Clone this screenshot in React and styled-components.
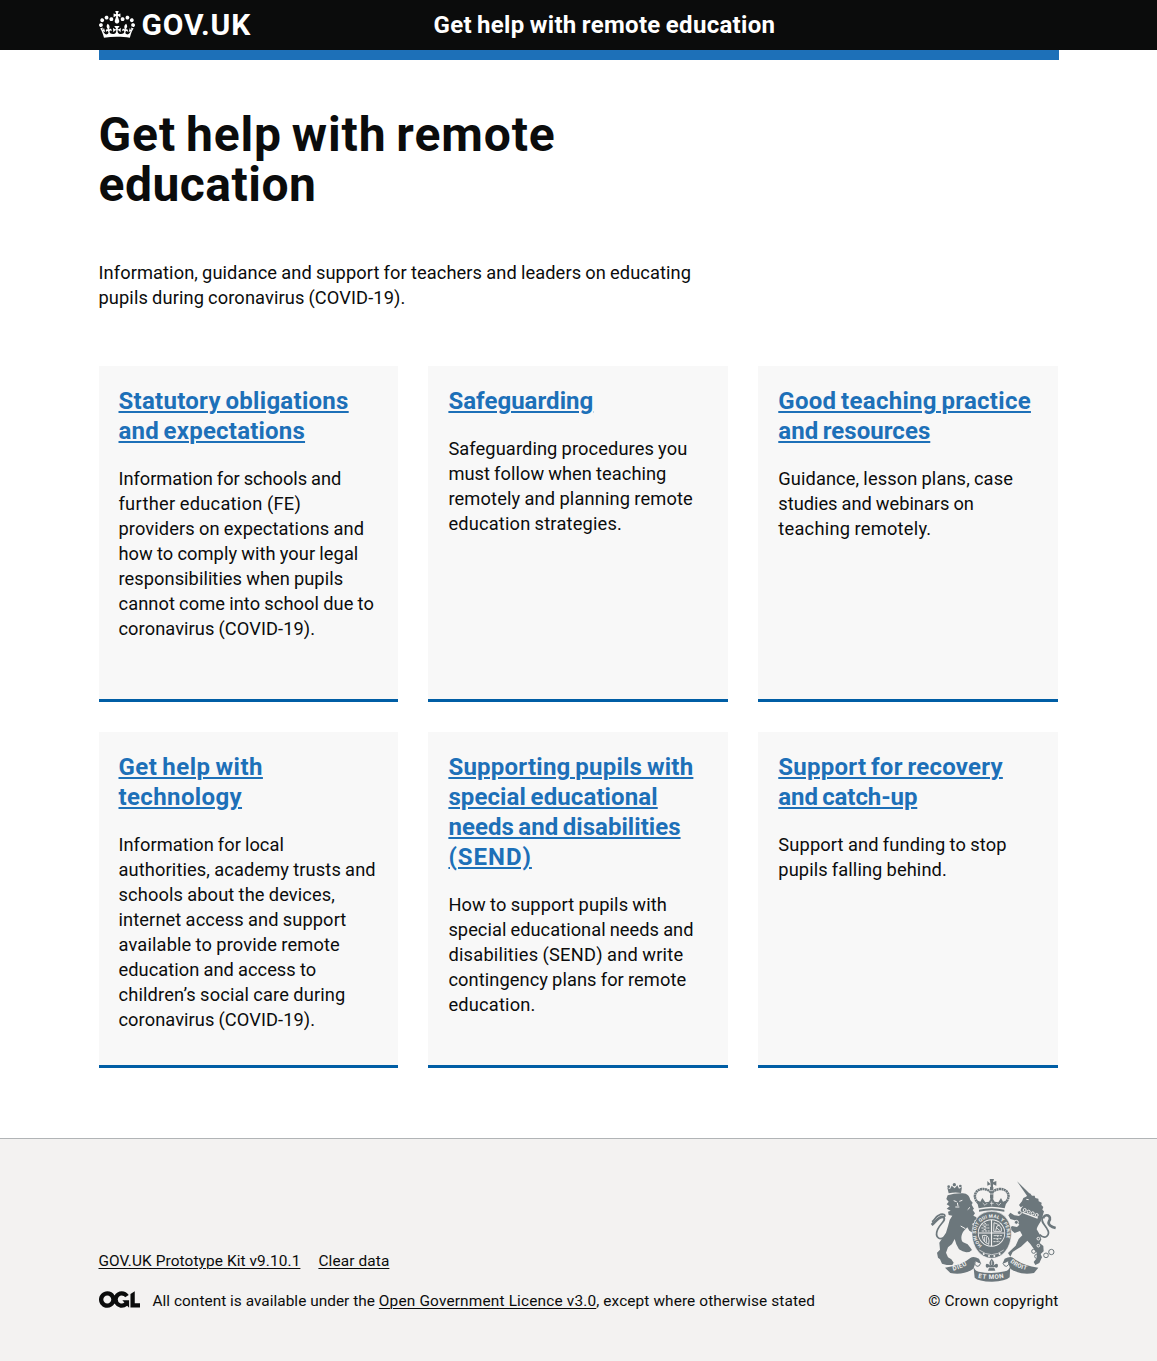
import React from 'react';
import styled, { createGlobalStyle } from 'styled-components';

const ink = '#0b0c0c';
const blue = '#1d70b8';
const crestGrey = '#6c777c';
const paper = '#f3f2f1';

const GlobalStyle = createGlobalStyle`
  body {
    margin: 0;
    background: ${paper};
    color: ${ink};
    font-family: Roboto, 'Liberation Sans', sans-serif;
  }
`;

const Container = styled.div`
  width: 960px;
  margin: 0 auto;
`;

const Header = styled.header`
  background: ${ink};
  color: #fff;
`;

const HeaderRow = styled(Container)`
  display: flex;
  height: 50px;
`;

const BlueBar = styled.div`
  width: 960px;
  height: 10px;
  margin: 0 auto;
  background: ${blue};
`;

const Brand = styled.a`
  display: flex;
  box-sizing: border-box;
  width: 335px;
  padding-top: 10px;
  gap: 7px;
  color: #fff;
  text-decoration: none;
`;

const CrownIcon = styled.svg`
  display: block;
  width: 36px;
  height: 27px;
  margin-top: 0.6px;
`;

const BrandName = styled.span`
  font-size: 30px;
  font-weight: 700;
  line-height: 30px;
  letter-spacing: 0.8px;
`;

const ServiceName = styled.span`
  font-size: 24px;
  font-weight: 700;
  line-height: 51px;
  letter-spacing: 0.3px;
  word-spacing: -1px;
`;

const Page = styled.div`
  background: #fff;
`;

const Main = styled.main`
  width: 960px;
  margin: 0 auto;
  padding: 50px 0 70px;
`;

const Line = styled.span`
  display: block;
  width: max-content;
  white-space: nowrap;
  letter-spacing: ${(p) => p.$track}px;
`;

const Title = styled.h1`
  margin: 0 0 50px;
  font-size: 48px;
  font-weight: 700;
  line-height: 50px;
  word-spacing: -3px;
`;

const Paragraph = styled.p`
  margin: 0;
  font-size: 18.25px;
  line-height: 25px;
  word-spacing: -0.5px;
`;

const Cards = styled.div`
  display: grid;
  grid-template-columns: repeat(3, 299.9px);
  grid-auto-rows: 336px;
  gap: 30px;
  margin-top: 56px;
`;

const Card = styled.section`
  box-sizing: border-box;
  padding: 20px;
  background: #f8f8f8;
  border-bottom: 3px solid #005ea5;
`;

const CardTitle = styled.h2`
  margin: 0 0 20px;
  font-size: 24px;
  font-weight: 700;
  line-height: 30px;
  word-spacing: -1.5px;
`;

const CardLink = styled.a`
  color: ${blue};
  text-decoration: none;

  ${Line} {
    text-decoration: underline;
    text-decoration-thickness: 2px;
    text-underline-offset: 2px;
  }
`;

const Footer = styled.footer`
  border-top: 1px solid #b1b4b6;
  background: ${paper};
  font-size: 15.4px;
  line-height: 20px;
`;

const FooterRow = styled(Container)`
  display: flex;
  justify-content: space-between;
  align-items: flex-end;
  padding: 39px 0 50px;
`;

const FooterLinks = styled.nav`
  display: flex;
  gap: 18px;
  margin-bottom: 20px;
`;

const FooterLink = styled.a`
  color: ${ink};
  letter-spacing: ${(p) => p.$track}px;
  text-decoration: underline;
  text-decoration-thickness: 1px;
  text-underline-offset: 2px;
`;

const Licence = styled.div`
  display: flex;
  align-items: center;
`;

const OglIcon = styled.svg`
  width: 41px;
  height: 17px;
  margin: 0 13px 3px 0;
`;

const Tracked = styled.span`
  white-space: pre;
  letter-spacing: ${(p) => p.$track}px;
`;

const Copyright = styled.div`
  display: flex;
  flex-direction: column;
  align-items: flex-end;
  gap: 9px;
`;

const CrestIcon = styled.svg`
  display: block;
  width: 127px;
  height: 104px;
  margin-right: 1.5px;
`;

const cards = [
  {
    title: [['Statutory obligations', 0.28], ['and expectations', 0.21]],
    text: [
      ['Information for schools and', -0.04],
      ['further education (FE)', 0.28],
      ['providers on expectations and', 0.1],
      ['how to comply with your legal', 0.07],
      ['responsibilities when pupils', 0.05],
      ['cannot come into school due to', 0.08],
      ['coronavirus (COVID-19).', 0.07],
    ],
  },
  {
    title: [['Safeguarding', 0.03]],
    text: [
      ['Safeguarding procedures you', 0.1],
      ['must follow when teaching', 0.05],
      ['remotely and planning remote', 0.145],
      ['education strategies.', 0.18],
    ],
  },
  {
    title: [['Good teaching practice', 0.28], ['and resources', 0.04]],
    text: [
      ['Guidance, lesson plans, case', 0.1],
      ['studies and webinars on', -0.01],
      ['teaching remotely.', 0.25],
    ],
  },
  {
    title: [['Get help with', 0.48], ['technology', 0.38]],
    text: [
      ['Information for local', 0.04],
      ['authorities, academy trusts and', 0.12],
      ['schools about the devices,', 0.12],
      ['internet access and support', 0.11],
      ['available to provide remote', 0.15],
      ['education and access to', 0.05],
      ['children’s social care during', 0.15],
      ['coronavirus (COVID-19).', 0.07],
    ],
  },
  {
    title: [
      ['Supporting pupils with', 0.24],
      ['special educational', 0.11],
      ['needs and disabilities', 0.04],
      ['(SEND)', 0.98],
    ],
    text: [
      ['How to support pupils with', 0.12],
      ['special educational needs and', 0.04],
      ['disabilities (SEND) and write', 0.23],
      ['contingency plans for remote', 0.08],
      ['education.', 0.2],
    ],
  },
  {
    title: [['Support for recovery', 0.25], ['and catch-up', -0.09]],
    text: [
      ['Support and funding to stop', 0.15],
      ['pupils falling behind.', 0.1],
    ],
  },
];

const Lines = ({ items }) =>
  items.map(([text, track], i) => (
    <Line key={text} $track={track}>
      {text}
      {i < items.length - 1 ? ' ' : ''}
    </Line>
  ));

const Crown = () => (
  <CrownIcon viewBox="0 0 132 97" preserveAspectRatio="none" aria-hidden="true">
    <path
      fill="#fff"
      fillRule="evenodd"
      d="M25 30.2c3.5 1.5 7.7-.2 9.1-3.7 1.5-3.6-.2-7.8-3.9-9.2-3.6-1.4-7.6.3-9.1 3.9-1.4 3.5.3 7.5 3.9 9zM9 39.5c3.6 1.5 7.8-.2 9.2-3.7 1.5-3.6-.2-7.8-3.9-9.1-3.6-1.5-7.6.2-9.1 3.8-1.4 3.5.3 7.5 3.8 9zM4.4 57.2c3.5 1.5 7.7-.2 9.1-3.8 1.5-3.6-.2-7.7-3.9-9.1-3.5-1.5-7.6.3-9.1 3.8-1.4 3.5.3 7.6 3.9 9.1zm38.3-21.4c3.5 1.5 7.7-.2 9.1-3.8 1.5-3.6-.2-7.7-3.9-9.1-3.6-1.5-7.6.3-9.1 3.8-1.3 3.6.4 7.7 3.9 9.1zm64.4-5.6c-3.6 1.5-7.8-.2-9.1-3.7-1.5-3.6.2-7.8 3.8-9.2 3.6-1.4 7.7.3 9.2 3.9 1.3 3.5-.4 7.5-3.9 9zm15.9 9.3c-3.6 1.5-7.7-.2-9.1-3.7-1.5-3.6.2-7.8 3.7-9.1 3.6-1.5 7.7.2 9.2 3.8 1.5 3.5-.3 7.5-3.8 9zm4.7 17.7c-3.6 1.5-7.8-.2-9.2-3.8-1.5-3.6.2-7.7 3.9-9.1 3.6-1.5 7.7.3 9.2 3.8 1.3 3.5-.4 7.6-3.9 9.1zM89.3 35.8c-3.6 1.5-7.8-.2-9.2-3.8-1.4-3.6.2-7.7 3.9-9.1 3.6-1.5 7.7.3 9.2 3.8 1.4 3.6-.3 7.7-3.9 9.1zM69.7 17.7l8.9 4.7V9.3l-8.9 2.8c-.2-.3-.5-.6-.9-.9L72.4 0H59.6l3.5 11.2c-.3.3-.6.5-.9.9l-8.8-2.8v13.1l8.8-4.7c.3.3.6.7.9.9l-5 15.4v.1c-.2.8-.4 1.6-.4 2.4 0 4.1 3.1 7.5 7 8.1h.2c.3 0 .7.1 1 .1.4 0 .7 0 1-.1h.2c4-.6 7.1-4.1 7.1-8.1 0-.8-.1-1.7-.4-2.4V34l-5.1-15.4c.4-.2.7-.6 1-.9zM66 92.8c16.9 0 32.8 1.1 47.1 3.2 4-16.9 8.9-26.7 14-33.5l-9.6-3.4c1 4.9 1.1 7.2 0 10.2-1.5-1.4-3-4.3-4.2-8.7L108.6 76c2.8-2 5-3.2 7.5-3.3-4.4 9.4-10 11.9-13.6 11.2-4.3-.8-6.3-4.6-5.6-7.9 1-4.7 5.7-5.9 8-.5 4.3-8.7-3-11.4-7.6-8.8 7.1-7.2 7.9-13.5 2.1-21.1-8 6.1-8.1 12.3-4.5 20.8-4.7-5.4-12.1-2.5-9.5 6.2 3.4-5.2 7.9-2 7.2 3.1-.6 4.3-6.4 7.8-13.5 7.2-10.3-.9-10.9-8-11.2-13.8 2.5-.5 7.1 1.8 11 7.3L80.2 60c-4.1 4.4-8 5.3-12.3 5.4 1.4-4.4 8-11.6 8-11.6H55.5s6.4 7.2 7.9 11.6c-4.2-.1-8-1-12.3-5.4l1.4 16.4c3.9-5.5 8.5-7.7 10.9-7.3-.3 5.8-.9 12.8-11.1 13.8-7.2.6-12.9-2.9-13.5-7.2-.7-5 3.8-8.3 7.1-3.1 2.7-8.7-4.6-11.6-9.4-6.2 3.7-8.5 3.6-14.7-4.6-20.8-5.8 7.6-5 13.9 2.2 21.1-4.7-2.6-11.9.1-7.7 8.8 2.3-5.5 7.1-4.2 8.1.5.7 3.3-1.3 7.1-5.7 7.9-3.5.7-9-1.8-13.5-11.2 2.5.1 4.7 1.3 7.5 3.3l-4.7-15.4c-1.2 4.4-2.7 7.2-4.3 8.7-1.1-3-.9-5.3 0-10.2l-9.5 3.4c5 6.9 9.9 16.7 14 33.5 14.8-2.1 30.8-3.2 47.7-3.2z"
    />
  </CrownIcon>
);

const Ogl = () => (
  <OglIcon viewBox="0 0 483.2 195.7" aria-hidden="true">
    <path
      fill={ink}
      d="M421.5 142.8V.1l-50.7 32.3v161.1h112.4v-50.7zm-122.3-9.6A47.12 47.12 0 0 1 221 97.8c0-26 21.1-47.1 47.1-47.1 16.7 0 31.4 8.7 39.7 21.8l42.7-27.2A97.63 97.63 0 0 0 268.1 0c-36.5 0-68.3 20.1-85.1 49.7A98 98 0 0 0 97.8 0C43.9 0 0 43.9 0 97.8s43.9 97.8 97.8 97.8c36.5 0 68.3-20.1 85.1-49.7a97.76 97.76 0 0 0 149.6 25.4l19.4 22.2h3v-87.8h-80l24.3 27.5zM97.8 145c-26 0-47.1-21.1-47.1-47.1s21.1-47.1 47.1-47.1 47.1 21.1 47.1 47.1S123.8 145 97.8 145"
    />
  </OglIcon>
);

const Crest = () => (
  <CrestIcon viewBox="30 24 381 312" aria-hidden="true">
    <defs>
      <path id="garter" d="M186 226 A46.5 46.5 0 1 1 243 226" />
      <path id="mottoLeft" d="M100 302 Q132 294 158 273" />
      <path id="mottoMid" d="M174 323 Q216 332 259 321" />
      <path id="mottoRight" d="M270 276 Q292 297 337 304" />
    </defs>

    {/* lion */}
    <g fill={crestGrey}>
      <path d="M86 70 L82 53 L90 57 L95 47 L104 55 L112 46 L117 56 L126 51 L123 69 Q104 66 86 70z" />
      <circle cx="103" cy="44" r="5" />
      <circle cx="86" cy="50" r="4" />
      <circle cx="121" cy="48" r="4" />
      <path d="M83 76 Q104 69 128 70 C142 70 149 80 151 90 L158 98 L155 104 L162 116 L158 120 L165 130 L160 137 L168 141 L174 150 L164 150 L163 158 L156 162 L164 172 L170 176 L168 182 L176 190 L168 192 L160 190 L148 182 L142 172 L134 180 C124 190 121 206 128 216 L143 223 L150 232 L156 240 L148 246 L139 247 L128 244 L117 238 L109 223 L104 207 L96 222 L84 232 L78 248 L84 262 L94 268 L101 278 L97 285 L80 285 L66 281 L60 268 L54 263 L51 248 L60 239 L58 218 L68 203 L78 188 L85 165 L89 150 L97 137 L86 135 L84 125 L92 122 L80 116 L89 109 L80 103 L86 95 L79 87z" />
    </g>
    <g fill="none" stroke={crestGrey}>
      <path d="M82 194 C59 218 43 201 53 178 C63 158 80 151 71 140" strokeWidth="5" />
      <path d="M73 143 C62 134 50 152 35 165" strokeWidth="8" />
      <path d="M74 140 C78 131 64 131 56 136 C45 142 43 151 36 155" strokeWidth="5" />
    </g>
    <path d="M101 92 l9 3 M118 94 l9 -3 M112 98 l2 10 M106 111 h12 M150 112 l-7 7 M136 176 l-14 -8" stroke={paper} strokeWidth="3" fill="none" />

    {/* unicorn */}
    <g fill={crestGrey}>
      <path d="M291 34 L331 73 L323 80z" />
      <path d="M318 80 L330 70 L336 77 L344 77 L346 84 L355 86 L356 94 L365 98 L364 105 L370 111 L367 119 L372 124 L366 145 C361 160 353 165 350 178 L360 195 L364 208 L359 219 L370 228 L371 244 L362 252 L366 262 L358 279 L346 285 L341 276 L350 265 L350 248 L340 235 L331 222 L322 212 L303 230 L278 246 L271 260 L264 249 L279 235 L287 227 L296 207 L307 196 L300 183 L284 189 L276 182 L268 176 L276 168 L291 171 L298 164 L284 151 L271 147 L265 136 L271 128 L283 136 L298 138 L303 116 L309 108 L302 112 L297 105 L306 94 L310 84z" />
    </g>
    <g fill="none" stroke={crestGrey}>
      <path d="M359 194 C376 211 393 194 381 176 C373 162 361 155 368 141" strokeWidth="5" />
      <path d="M369 145 C374 128 398 137 387 154 C382 163 394 171 407 174" strokeWidth="8" />
      <circle cx="341" cy="244" r="6" strokeWidth="3" />
      <circle cx="350" cy="259" r="6" strokeWidth="3" />
      <circle cx="378" cy="256" r="7" strokeWidth="3" />
      <circle cx="394" cy="246" r="8" strokeWidth="3" />
    </g>
    <g stroke={paper} fill="none">
      <path d="M307 127 L353 144" strokeWidth="4" />
      <path d="M319 88 l7 1" strokeWidth="3" />
      <g fill={crestGrey} strokeWidth="3">
        <circle cx="314" cy="120" r="4.5" />
        <circle cx="326" cy="125" r="4.5" />
        <circle cx="338" cy="130" r="4.5" />
        <circle cx="350" cy="135" r="4.5" />
        <circle cx="298" cy="128" r="6" />
        <circle cx="289" cy="157" r="6" />
        <circle cx="355" cy="206" r="4" />
        <circle cx="355" cy="227" r="4" />
      </g>
    </g>

    {/* royal crown */}
    <g fill={crestGrey}>
      <path d="M212 43 L209 27 H222 L219 37 L229 33 V47 L219 43 V52 H212 V43 L202 47 V33z" />
      <path d="M176 115 L170 91 L181 95 L187 84 L196 97 L207 95 L215 80 L224 95 L235 97 L243 84 L249 95 L261 91 L254 115 Q215 106 176 115z" />
      <path d="M177 119 Q215 110 253 119 V125 Q215 116 177 125z" />
      <path d="M210 51 h10 v35 h-10z" />
    </g>
    <path
      d="M175 99 C153 78 170 56 190 57 Q207 58 215 70 Q223 58 240 57 C261 56 277 78 255 99"
      fill="none"
      stroke={crestGrey}
      strokeWidth="7.5"
      strokeDasharray="6 1.2"
    />
    <path d="M188 99 l7 7 7 -7 M229 99 l7 7 7 -7 M210 100 h11 M215 94 v13 M210 62 h10 M210 72 h10" stroke={paper} strokeWidth="2" fill="none" />

    {/* garter and shield */}
    <path d="M215 124 C254 124 274 156 274 193 C273 230 250 265 215 265 C180 265 157 230 156 193 C156 156 176 124 215 124z" fill={crestGrey} stroke={paper} strokeWidth="2" />
    <circle cx="214.5" cy="189" r="41" fill={paper} />
    <circle cx="214.5" cy="189" r="38.5" fill={crestGrey} />
    <path d="M214.5 150 V228 M176 189 H253" stroke={paper} strokeWidth="3.5" />
    <g stroke={paper} strokeWidth="2.6" fill="none">
      <path d="M187 165 h20 M184 174 h24 M185 183 h24 M192 158 l8 5 M191 169 l9 2 M191 178 l9 2" strokeDasharray="7 2" />
      <path d="M222 158 Q236 160 244 174 V184 H221z M227 182 l4 -14 8 -3 M229 173 l10 8" />
      <path d="M187 197 Q205 192 207 211 L206 223 Q187 215 187 197z M193 200 v14 M199 200 v18" />
      <path d="M221 197 h25 M220 206 h24 M220 215 h20 M229 196 l7 5 M229 207 l7 4" strokeDasharray="7 2" />
    </g>
    <path d="M178 240 Q215 268 251 240" stroke={paper} strokeWidth="2" fill="none" />
    <g fill={paper}>
      <circle cx="191" cy="252" r="3" />
      <circle cx="207" cy="258" r="3" />
      <circle cx="223" cy="258" r="3" />
      <circle cx="239" cy="252" r="3" />
    </g>
    <text fill={paper} fontSize="14" fontWeight="700" letterSpacing="0.7">
      <textPath href="#garter">HONI SOIT QUI MAL Y PENSE</textPath>
    </text>

    {/* motto ribbon */}
    <path d="M75 293 Q126 286 151 264 Q160 257 177 266 L184 282 Q166 274 163 288 L160 296 Q129 317 91 309z" fill={crestGrey} />
    <path d="M355 293 Q305 286 280 264 Q271 257 254 266 L247 282 Q265 274 268 288 L271 296 Q303 317 342 309z" fill={crestGrey} />
    <path d="M160 286 Q163 303 176 305 Q216 314 255 304 Q268 301 271 287 L269 322 Q257 334 216 335 Q175 334 164 323z" fill={crestGrey} />
    <path d="M166 274 Q160 284 171 289 Q179 290 181 281 M265 274 Q271 284 260 289 Q252 290 250 281" fill={paper} stroke={crestGrey} strokeWidth="3" />
    <path d="M215 266 Q203 278 212 288 Q197 274 197 288 Q198 297 208 291 L204 302 H226 L222 291 Q233 297 234 288 Q234 274 219 288 Q228 278 215 266z" fill={crestGrey} />
    <path d="M205 293 H226 M215 272 v13" stroke={paper} strokeWidth="2" />
    <g fill={paper} fontSize="18.5" fontWeight="700">
      <text letterSpacing="1.5">
        <textPath href="#mottoLeft">DIEU</textPath>
      </text>
      <text letterSpacing="2">
        <textPath href="#mottoMid">ET MON</textPath>
      </text>
      <text letterSpacing="0.8" fontSize="18">
        <textPath href="#mottoRight">DROIT</textPath>
      </text>
    </g>
  </CrestIcon>
);

export default function App() {
  return (
    <>
      <GlobalStyle />
      <Header>
        <HeaderRow>
          <Brand>
            <Crown />
            <BrandName>GOV.UK</BrandName>
          </Brand>
          <ServiceName>Get help with remote education</ServiceName>
        </HeaderRow>
      </Header>
      <Page>
        <BlueBar />
        <Main>
          <Title>
            <Lines items={[['Get help with remote', 0.9], ['education', 0.5]]} />
          </Title>
          <Paragraph>
            <Lines
              items={[
                ['Information, guidance and support for teachers and leaders on educating', 0.09],
                ['pupils during coronavirus (COVID-19).', 0.1],
              ]}
            />
          </Paragraph>
          <Cards>
            {cards.map((card) => (
              <Card key={card.title[0][0]}>
                <CardTitle>
                  <CardLink>
                    <Lines items={card.title} />
                  </CardLink>
                </CardTitle>
                <Paragraph>
                  <Lines items={card.text} />
                </Paragraph>
              </Card>
            ))}
          </Cards>
        </Main>
      </Page>
      <Footer>
        <FooterRow>
          <div>
            <FooterLinks>
              <FooterLink $track={0.1}>GOV.UK Prototype Kit v9.10.1</FooterLink>
              <FooterLink $track={0.12}>Clear data</FooterLink>
            </FooterLinks>
            <Licence>
              <Ogl />
              <Tracked $track={0.03}>All content is available under the </Tracked>
              <FooterLink $track={0.17}>Open Government Licence v3.0</FooterLink>
              <Tracked $track={0.1}>, except where otherwise stated</Tracked>
            </Licence>
          </div>
          <Copyright>
            <Crest />
            <Tracked $track={0.17}>© Crown copyright</Tracked>
          </Copyright>
        </FooterRow>
      </Footer>
    </>
  );
}
